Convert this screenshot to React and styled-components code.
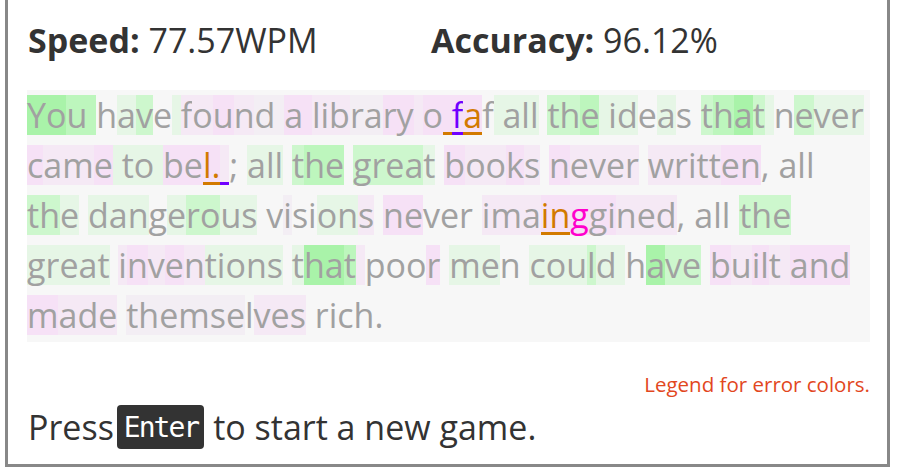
import React from 'react'
import styled, { createGlobalStyle } from 'styled-components'

const GlobalStyle = createGlobalStyle`
  body {
    margin: 0;
    background: #fff;
    font-family: 'Open Sans', 'Noto Sans', sans-serif;
  }
`

const Frame = styled.div`
  box-sizing: border-box;
  width: 885px;
  height: 467px;
  margin-left: 5px;
  border: 3px solid #888;
  border-top: none;
  padding: 0 17px 0 19px;
  display: flex;
  flex-direction: column;
`

const StatsRow = styled.div`
  display: flex;
  align-items: center;
  height: 80px;
  margin-bottom: 10px;
  color: #333;
  font-size: 34px;
`

const Stat = styled.div`
  width: ${(props) => props.width}px;
  padding-left: 1px;
  white-space: pre;
`

const Label = styled.span`
  font-weight: 700;
`

const TextArea = styled.div`
  background: #f7f7f7;
  padding-bottom: 2px;
`

const Line = styled.div`
  display: flex;
  align-items: center;
  height: 50px;
  font-size: 34px;
  color: #a1a1a1;
  white-space: nowrap;
`

const palette = {
  A: '#a9f3a9',
  B: '#bdf6bd',
  C: '#cdf7cd',
  D: '#e6f6e6',
  p: '#f6e1f6',
  q: '#f5e9f5',
  r: '#f3eef4',
  '.': 'transparent',
}

const marks = {
  o: '#d27a00',
  u: '#7000ff',
  m: '#ff00cc',
}

const Char = styled.span`
  display: inline-block;
  height: 40px;
  line-height: 40px;
  white-space: pre;
  background: ${(props) => palette[props.$bg]};
  color: ${(props) => (props.$mark ? marks[props.$mark] : 'inherit')};
  box-shadow: ${(props) =>
    props.$mark && props.$mark !== 'm' ? `inset 0 -3px 0 ${marks[props.$mark]}` : 'none'};
`

const Legend = styled.div`
  margin-top: 28px;
  text-align: right;
  font-size: 20.5px;
  color: #e2471e;
`

const Prompt = styled.div`
  display: flex;
  align-items: center;
  margin-top: 6px;
  padding-left: 1px;
  font-size: 34px;
  color: #333;
  white-space: pre;
`

const Key = styled.kbd`
  display: inline-flex;
  align-items: center;
  height: 44px;
  padding: 0 6px 0 7px;
  margin: 0 9px 0 3px;
  border-radius: 4px;
  background: #333;
  color: #fff;
  font-family: 'DejaVu Sans Mono', 'Liberation Mono', monospace;
  font-size: 28px;
  letter-spacing: -2px;
`

const lines = [
  [
    ['You ', 'AABB'], ['have ', '.DC.D'], ['found ', 'qqpqrr'], ['a ', 'pp'],
    ['library ', 'qqqrrppq'], ['o', 'p'], [' ', 'p', 'o'], ['f', 'p', 'u'], ['a', 'p', 'o'],
    ['f ', '.D'], ['all ', 'DDD.'], ['the ', 'CCBD'], ['ideas ', 'DD.D..'],
    ['that ', 'CBACD'], ['never', '.CDDD'],
  ],
  [
    ['came', 'pqqp'], [' to ', 'DDDD'], ['be', 'pp'], ['l', 'p', 'o'], ['.', 'p', 'o'],
    [' ', 'q', 'u'], ['; ', '..'], ['all ', 'DDD.'], ['the ', 'CBB.'], ['great ', 'CCCCD.'],
    ['books ', 'pqqpq.'], ['never ', 'pqqqq.'], ['written, ', 'qqqqqpp..'], ['all', '...'],
  ],
  [
    ['the ', 'CCD.'], ['dangerous ', 'DDD.DCCDD.'], ['visions ', '.r..DDq.'],
    ['never ', 'pp....'], ['ima', 'qqq'], ['in', 'pp', 'o'], ['g', 'p', 'm'],
    ['gined, ', 'ppqqq..'], ['all ', '....'], ['the', 'CCC'],
  ],
  [
    ['great ', 'DDDDD.'], ['inventions ', 'qpqpqDDDDD.'], ['that ', 'DAABq'],
    ['poor ', '...p.'], ['men ', 'DD..'], ['could ', 'DDDCDD'], ['have ', '.ACC.'],
    ['built ', 'pqppqq'], ['and', 'ppp'],
  ],
  [['made ', 'pqqq.'], ['themselves ', 'rrrrrr.qqq.'], ['rich.', '.....']],
]

function TextLine({ segments }) {
  const chars = []
  segments.forEach(([text, codes, mark], s) => {
    text.split('').forEach((ch, i) => {
      chars.push(
        <Char key={`${s}-${i}`} $bg={codes[i]} $mark={mark}>
          {ch}
        </Char>
      )
    })
  })
  return <Line>{chars}</Line>
}

function App() {
  return (
    <>
      <GlobalStyle />
      <Frame>
        <StatsRow>
          <Stat width={402}>
            <Label>Speed:</Label> 77.57WPM
          </Stat>
          <Stat>
            <Label>Accuracy:</Label> 96.12%
          </Stat>
        </StatsRow>
        <TextArea>
          {lines.map((segments, i) => (
            <TextLine key={i} segments={segments} />
          ))}
        </TextArea>
        <Legend>Legend for error colors.</Legend>
        <Prompt>
          Press<Key>Enter</Key>to start a new game.
        </Prompt>
      </Frame>
    </>
  )
}

export default App
